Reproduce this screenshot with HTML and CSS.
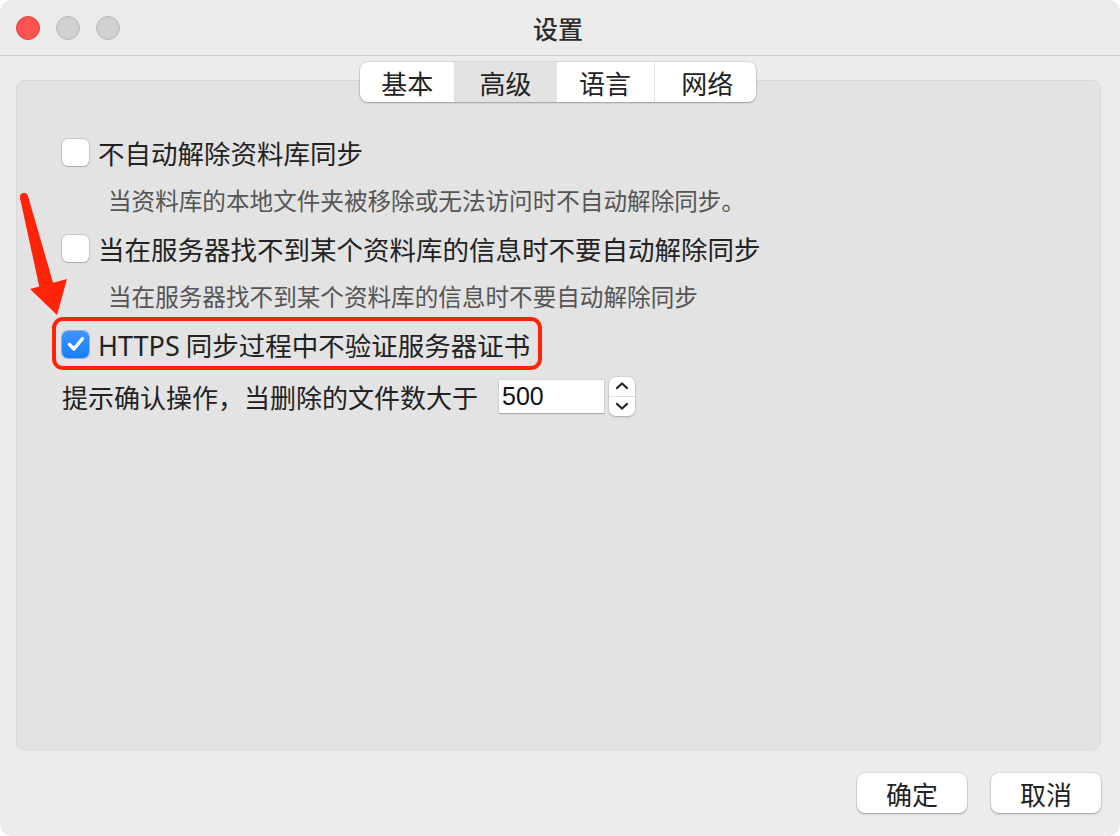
FILE: index.html
```html
<!DOCTYPE html>
<html lang="zh-CN">
<head>
    <meta charset="UTF-8">
    <title>设置</title>
    <link rel="stylesheet" href="styles.css">
</head>
<body>
    <div class="window">
        <div class="titlebar">
            <div class="lights">
                <span class="light close"></span>
                <span class="light"></span>
                <span class="light"></span>
            </div>
            <div class="title">设置</div>
        </div>

        <div class="content">
            <div class="tabs">
                <div class="tab">基本</div>
                <div class="tab active">高级</div>
                <div class="tab">语言</div>
                <div class="tab last">网络</div>
            </div>

            <div class="panel">
                <div class="row">
                    <span class="check"></span>
                    <span class="label">不自动解除资料库同步</span>
                </div>
                <div class="desc">当资料库的本地文件夹被移除或无法访问时不自动解除同步。</div>
                <div class="row">
                    <span class="check"></span>
                    <span class="label">当在服务器找不到某个资料库的信息时不要自动解除同步</span>
                </div>
                <div class="desc">当在服务器找不到某个资料库的信息时不要自动解除同步</div>
                <div class="row marked">
                    <span class="check checked">
                        <svg width="20" height="18" viewBox="0 0 20 18"><path d="M3.5 9.5 L8 14 L16.5 3.5" fill="none" stroke="#fff" stroke-width="3.4" stroke-linecap="round" stroke-linejoin="round"/></svg>
                    </span>
                    <span class="label"><span class="latin">HTTPS</span> 同步过程中不验证服务器证书</span>
                </div>
                <div class="row confirm">
                    <span class="label small">提示确认操作，当删除的文件数大于</span>
                    <span class="number">500</span>
                    <span class="stepper">
                        <span class="step">
                            <svg width="14" height="10" viewBox="0 0 14 10"><path d="M2 7 L7 2.5 L12 7" fill="none" stroke="#222" stroke-width="2.2" stroke-linecap="round" stroke-linejoin="round"/></svg>
                        </span>
                        <span class="step down">
                            <svg width="14" height="10" viewBox="0 0 14 10"><path d="M2 3 L7 7.5 L12 3" fill="none" stroke="#222" stroke-width="2.2" stroke-linecap="round" stroke-linejoin="round"/></svg>
                        </span>
                    </span>
                </div>
            </div>

            <div class="buttons">
                <div class="button">确定</div>
                <div class="button">取消</div>
            </div>
        </div>

        <!-- annotation arrow -->
        <svg class="arrow" width="80" height="140" viewBox="0 0 80 140">
            <circle cx="24" cy="17" r="4" fill="#ff2408"/>
            <polygon points="20,18 28,16 54,106 40,110" fill="#ff2408"/>
            <polygon points="30,109 67,99 57,135" fill="#ff2408"/>
        </svg>
    </div>
</body>
</html>
```

FILE: styles.css
```css
body {
    margin: 0;
    background-color: #fff;
    font-family: "Noto Sans CJK SC", "Noto Sans", sans-serif;
    color: #222;
}

.window {
    position: relative;
    width: 1120px;
    height: 836px;
    background-color: #ececec;
    border-radius: 12px;
    overflow: hidden;
}

.titlebar {
    height: 56px;
    border-bottom: 1px solid #cbcbcb;
    box-sizing: border-box;
    display: flex;
    align-items: center;
    position: relative;
    background-color: #ebebeb;
}

.lights {
    display: flex;
    gap: 16px;
    padding-left: 16px;
}

.light {
    width: 22px;
    height: 22px;
    border-radius: 50%;
    background-color: #d1d1d1;
    border: 1px solid #b9b9b9;
}

.light.close {
    background-color: #fe5350;
    border-color: #e2443f;
}

.title {
    position: absolute;
    left: 0;
    right: 4px;
    text-align: center;
    font-size: 25px;
    font-weight: 500;
    color: #2c2c2c;
    line-height: 48px;
}

.content {
    padding: 6px 19px 0 16px;
}

.tabs {
    position: relative;
    z-index: 1;
    display: flex;
    width: 396px;
    height: 40px;
    margin-left: 344px;
    background-color: #fff;
    border-radius: 8px;
    box-shadow: 0 0 0 1px rgba(0, 0, 0, 0.08), 0 1px 2px rgba(0, 0, 0, 0.25);
    overflow: hidden;
}

.tab {
    display: flex;
    align-items: center;
    justify-content: center;
    width: 99px;
    font-size: 26px;
    color: #222;
    border-right: 1px solid #e2e2e2;
}

.tab:first-child {
    width: 96px;
}

.tab.active {
    width: 102px;
    background-color: #e3e3e3;
    border-right-color: #e3e3e3;
}

.tab.last {
    border-right: none;
    padding-left: 4px;
}

.panel {
    margin-top: -22px;
    height: 670px;
    box-sizing: border-box;
    background-color: #e3e3e3;
    border: 1px solid #d8d8d8;
    border-radius: 8px;
    padding: 47px 0 0 45px;
}

.row {
    display: flex;
    align-items: center;
    height: 48px;
}

.label {
    font-size: 26.5px;
    color: #222;
    white-space: nowrap;
}

.label.small {
    font-size: 26px;
}

.latin {
    font-family: "Noto Sans", "Liberation Sans", sans-serif;
    font-size: 27px;
}

.check {
    width: 27px;
    height: 27px;
    box-sizing: border-box;
    border-radius: 6px;
    background-color: #fff;
    box-shadow: 0 0 0 1px rgba(0, 0, 0, 0.12), 0 1px 1px rgba(0, 0, 0, 0.15);
    margin-right: 9px;
    display: flex;
    align-items: center;
    justify-content: center;
}

.check.checked {
    background: linear-gradient(#3a95ff, #1a7cf5);
    box-shadow: 0 0 0 1px rgba(0, 60, 180, 0.3);
}

.desc {
    height: 48px;
    line-height: 48px;
    padding-left: 46px;
    font-size: 23.6px;
    color: #555;
    white-space: nowrap;
}

.marked {
    position: relative;
    width: max-content;
}

.marked::before {
    content: "";
    position: absolute;
    left: -10px;
    right: -12px;
    top: -3px;
    bottom: -2px;
    border: 4px solid #ff2408;
    border-radius: 11px;
}

.confirm {
    margin-top: 4px;
}

.number {
    margin-left: 21px;
    width: 105px;
    height: 33px;
    box-sizing: border-box;
    background-color: #fff;
    box-shadow: 0 0 0 1px rgba(0, 0, 0, 0.06), 0 1px 1px rgba(0, 0, 0, 0.2);
    font-family: "Liberation Sans", Arial, sans-serif;
    font-size: 25px;
    line-height: 33px;
    padding-left: 3px;
    color: #111;
}

.stepper {
    margin-left: 5px;
    width: 26px;
    height: 39px;
    display: flex;
    flex-direction: column;
    background-color: #fff;
    border-radius: 7px;
    box-shadow: 0 0 0 1px rgba(0, 0, 0, 0.06), 0 1px 2px rgba(0, 0, 0, 0.2);
}

.step {
    flex: 1;
    display: flex;
    align-items: center;
    justify-content: center;
}

.step.down {
    border-top: 1px solid #e0e0e0;
}

.buttons {
    display: flex;
    justify-content: flex-end;
    gap: 24px;
    margin-top: 23px;
}

.button {
    width: 110px;
    height: 40px;
    display: flex;
    align-items: center;
    justify-content: center;
    background-color: #fff;
    border-radius: 8px;
    box-shadow: 0 0 0 1px rgba(0, 0, 0, 0.06), 0 1px 2px rgba(0, 0, 0, 0.3);
    font-size: 26px;
    color: #222;
}

.arrow {
    position: absolute;
    left: 0;
    top: 180px;
}
```
